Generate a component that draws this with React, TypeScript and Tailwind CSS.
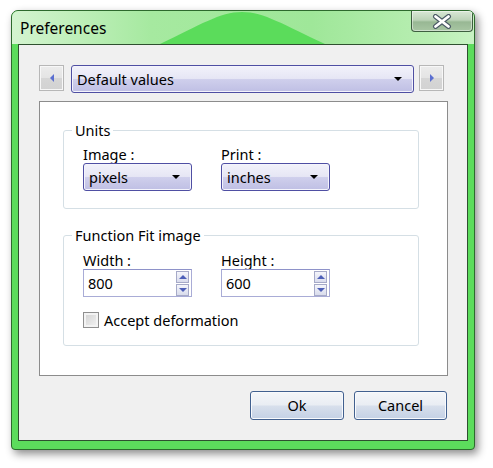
import React from 'react';

const font = { fontFamily: '"Segoe UI", "Noto Sans", "Open Sans", sans-serif' };

const Tri = ({ dir, className }: { dir: 'left' | 'right' | 'down' | 'up'; className?: string }) => {
  const pts = {
    left: '4,0 4,8 0,4',
    right: '0,0 0,8 4,4',
    down: '0,0 8,0 4,4',
    up: '0,4 8,4 4,0',
  }[dir];
  const vb = dir === 'left' || dir === 'right' ? '0 0 4 8' : '0 0 8 4';
  const size = dir === 'left' || dir === 'right' ? { width: 4, height: 8 } : { width: 8, height: 4 };
  return (
    <svg viewBox={vb} {...size} className={className}>
      <polygon points={pts} fill="currentColor" />
    </svg>
  );
};

const ArrowButton = ({ dir }: { dir: 'left' | 'right' }) => (
  <div className="flex h-[26px] w-[25px] items-center justify-center border border-[#b7b7b7] bg-[linear-gradient(#ececec_0%,#e4e4e4_50%,#d6d6d6_51%,#d2d2d2_100%)] text-[#5b6fd0] shadow-[inset_0_0_0_1px_#f7f7f7]">
    <Tri dir={dir} />
  </div>
);

const Combo = ({ label, className }: { label: string; className: string }) => (
  <div
    className={`flex items-center justify-between rounded-[3px] border border-[#4f4fa3] bg-[linear-gradient(#f2f2fa_0%,#e6e6f5_48%,#cfcfec_52%,#bfbfe4_100%)] pl-[5px] pr-[11px] text-[14.5px] text-black shadow-[inset_0_0_0_1px_#f4f4fc] ${className}`}
  >
    <span className="leading-none">{label}</span>
    <Tri dir="down" className="text-black" />
  </div>
);

const Spin = ({ value }: { value: string }) => (
  <div className="flex h-[28px] w-[109px] items-center justify-between border border-[#a9acd6] border-t-[#8e92c9] bg-white pl-[4px] pr-[2px]">
    <span className="text-[14.5px] leading-none text-black">{value}</span>
    <div className="flex flex-col gap-[1px]">
      <div className="flex h-[12px] w-[13px] items-center justify-center border border-[#a6aac8] bg-[linear-gradient(#f4f5fb,#d9dcec)] text-[#4d5fb8]">
        <Tri dir="up" />
      </div>
      <div className="flex h-[12px] w-[13px] items-center justify-center border border-[#a6aac8] bg-[linear-gradient(#f4f5fb,#d9dcec)] text-[#4d5fb8]">
        <Tri dir="down" />
      </div>
    </div>
  </div>
);

const DlgButton = ({ label, w }: { label: string; w: string }) => (
  <button
    className={`flex h-[29px] ${w} items-center justify-center rounded-[3px] border border-[#41608f] bg-[linear-gradient(#f4f6f9_0%,#e9edf3_48%,#d7dfec_52%,#c4d1e5_100%)] text-[14.5px] text-black shadow-[inset_0_0_0_1px_#f8fafd]`}
  >
    {label}
  </button>
);

export default function App() {
  return (
    <div className="min-h-[468px] w-[493px] bg-white pl-[11px] pt-[10px]" style={font}>
      <div className="flex h-[440px] w-[464px] flex-col rounded-t-[7px] rounded-b-[4px] border border-[#2d6a2d] bg-[#5cdc5c] shadow-[3px_4px_9px_rgba(0,0,0,0.45)]">
        {/* title bar */}
        <div className="relative flex h-[33px] shrink-0 items-start justify-between overflow-hidden rounded-t-[6px] bg-[linear-gradient(90deg,#d4f4d0_0%,#a6e9a0_30%,#9fe799_65%,#b8eeb2_90%,#c8f2c3_100%)]">
          <svg className="absolute inset-0" width="462" height="33" viewBox="0 0 462 33">
            <path d="M148 33 C188 14 208 1 230 1 C252 1 272 14 313 33 Z" fill="#5bdc5b" />
          </svg>
          <span className="relative ml-[8px] mt-[8px] text-[15.5px] leading-[18px] text-black">Preferences</span>
          <div className="relative mr-px flex h-[21px] w-[62px] items-center justify-center rounded-b-[4px] border border-t-0 border-[#3e5e40] bg-[linear-gradient(#d9e8d6_0%,#bcd3b8_45%,#98b894_55%,#a8c6a3_100%)] shadow-[inset_0_0_0_1px_rgba(255,255,255,0.45)]">
            <svg width="20" height="15" viewBox="0 0 20 15">
              <path d="M3.5 2.5 L16.5 12.5 M16.5 2.5 L3.5 12.5" stroke="#4b5a66" strokeWidth="5" strokeLinecap="round" />
              <path d="M3.5 2.5 L16.5 12.5 M16.5 2.5 L3.5 12.5" stroke="#ffffff" strokeWidth="2.8" strokeLinecap="round" />
            </svg>
          </div>
        </div>

        {/* client area */}
        <div className="mx-[6px] flex h-[397px] flex-col border border-[#2f5030] bg-[#f0f0f0] pl-[20px] pt-[20px]">
          <div className="flex items-start">
            <ArrowButton dir="left" />
            <Combo label="Default values" className="ml-[7px] h-[28px] w-[343px]" />
            <div className="ml-[5px]">
              <ArrowButton dir="right" />
            </div>
          </div>

          <div className="mt-[8px] h-[275px] w-[409px] border border-[#8c8c8c] bg-white pl-[23px] pt-[18px]">
            <fieldset className="h-[89px] w-[356px] rounded-[3px] border border-[#d5dfe5] pl-[19px]">
              <legend className="-ml-[11px] px-[3px] text-[14.5px] leading-[20px] text-black">Units</legend>
              <div className="flex gap-[29px] pt-[5px]">
                <div className="flex flex-col">
                  <span className="text-[14.5px] leading-[18px] text-black">Image :</span>
                  <Combo label="pixels" className="h-[28px] w-[109px]" />
                </div>
                <div className="flex flex-col">
                  <span className="text-[14.5px] leading-[18px] text-black">Print :</span>
                  <Combo label="inches" className="h-[28px] w-[109px]" />
                </div>
              </div>
            </fieldset>

            <fieldset className="mt-[16px] h-[121px] w-[356px] rounded-[3px] border border-[#d5dfe5] pl-[19px]">
              <legend className="-ml-[11px] px-[3px] text-[14.5px] leading-[20px] text-black">Function Fit image</legend>
              <div className="flex gap-[29px] pt-[6px]">
                <div className="flex flex-col">
                  <span className="text-[14.5px] leading-[18px] text-black">Width :</span>
                  <Spin value="800" />
                </div>
                <div className="flex flex-col">
                  <span className="text-[14.5px] leading-[18px] text-black">Height :</span>
                  <Spin value="600" />
                </div>
              </div>
              <div className="mt-[13px] flex items-center gap-[5px]">
                <div className="h-[16px] w-[16px] border border-[#8f8f8f] bg-[linear-gradient(135deg,#d0d0d0,#f4f4f4)] shadow-[inset_0_0_0_2px_#f3f3f3]" />
                <span className="text-[14.5px] leading-[20px] text-black">Accept deformation</span>
              </div>
            </fieldset>
          </div>

          <div className="mt-[15px] flex w-[408px] justify-end gap-[10px]">
            <DlgButton label="Ok" w="w-[94px]" />
            <DlgButton label="Cancel" w="w-[93px]" />
          </div>
        </div>
      </div>
    </div>
  );
}
